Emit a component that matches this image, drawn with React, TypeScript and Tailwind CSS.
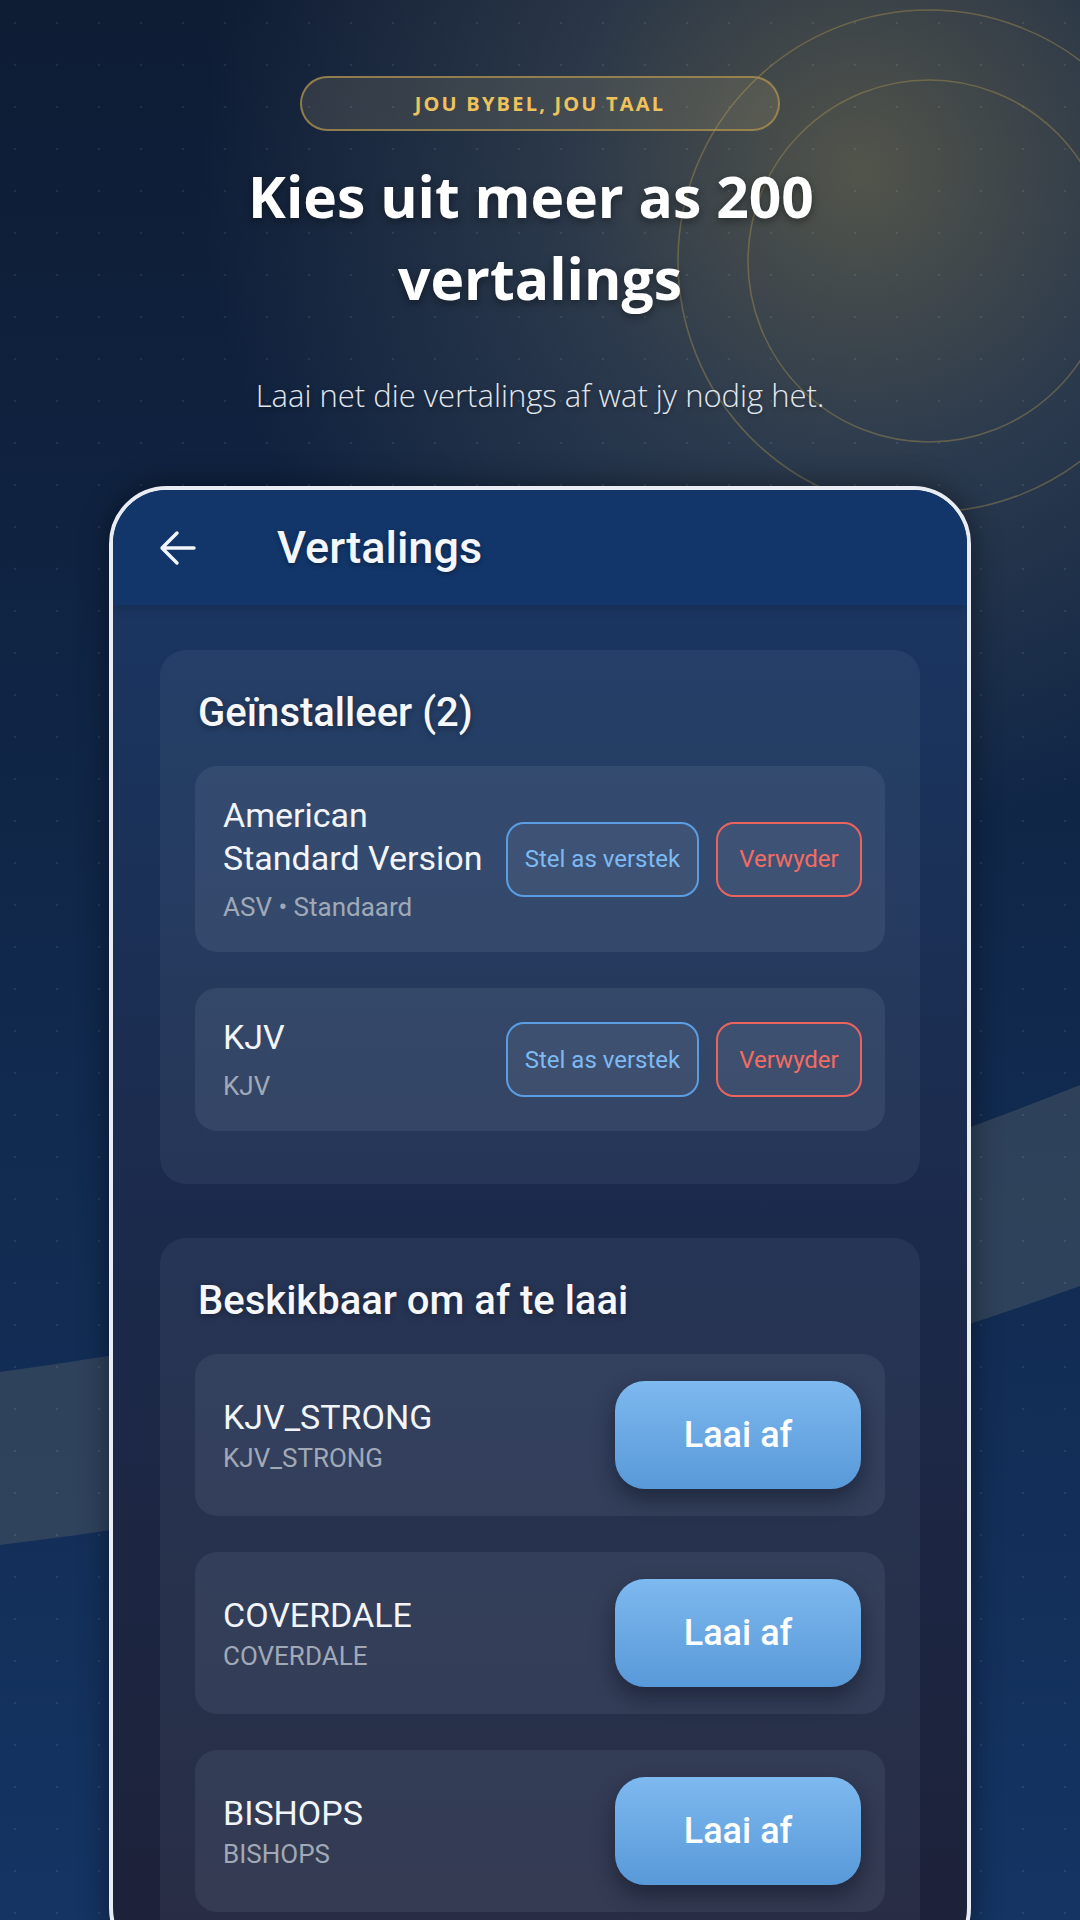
import React from "react";

type Installed = { name: string; sub: string };

const installed: Installed[] = [
  { name: "American Standard Version", sub: "ASV • Standaard" },
  { name: "KJV", sub: "KJV" },
];

const available: string[] = ["KJV_STRONG", "COVERDALE", "BISHOPS"];

function BackArrow() {
  return (
    <svg width="38" height="38" viewBox="0 0 38 38" fill="none">
      <path
        d="M35 19H4M18 4L3 19L18 34"
        stroke="#f2f5fa"
        strokeWidth="3.4"
        strokeLinecap="round"
        strokeLinejoin="round"
      />
    </svg>
  );
}

function Backdrop() {
  return (
    <>
      {/* soft golden glow top right */}
      <div className="absolute inset-0 bg-[radial-gradient(circle_at_860px_170px,rgba(124,118,86,0.62)_0px,rgba(82,92,98,0.42)_300px,rgba(40,60,90,0)_660px)]" />
      {/* swoosh band and rings */}
      <svg className="absolute inset-0" width="1080" height="1920" viewBox="0 0 1080 1920">
        <path
          d="M0 1372 Q540 1300 1080 1085 L1080 1286 Q540 1480 0 1545 Z"
          fill="#3a4b5e"
          fillOpacity="0.72"
        />
        <circle cx="929" cy="261" r="181" fill="none" stroke="#b89a52" strokeOpacity="0.38" strokeWidth="1.6" />
        <circle cx="929" cy="261" r="251" fill="none" stroke="#b89a52" strokeOpacity="0.38" strokeWidth="1.6" />
      </svg>
      {/* faint dot grid */}
      <div className="absolute inset-0 bg-[radial-gradient(circle,rgba(255,255,255,0.08)_1px,transparent_1.6px)] bg-[length:42px_42px] bg-[position:-6px_2px]" />
    </>
  );
}

function InstalledRow({ item }: { item: Installed }) {
  return (
    <div className="flex items-center rounded-[22px] bg-[#b4c3dc]/[0.10] py-[28px] pl-[28px] pr-[23px]">
      <div className="min-w-0 flex-1 pr-[12px]">
        <div className="text-[34px] leading-[43px] text-[#f1f4f9]">{item.name}</div>
        <div className="mt-[10px] text-[26px] leading-[34px] text-[#a1a9b7]">{item.sub}</div>
      </div>
      <div className="flex shrink-0 gap-[17px]">
        <button className="flex h-[75px] w-[193px] items-center justify-center rounded-[18px] border-2 border-[#5b9de2] bg-white/[0.05] text-[24px] text-[#7dbaf3]">
          Stel as verstek
        </button>
        <button className="flex h-[75px] w-[146px] items-center justify-center rounded-[18px] border-2 border-[#ea645d] bg-white/[0.05] text-[24px] text-[#f36c63]">
          Verwyder
        </button>
      </div>
    </div>
  );
}

function AvailableRow({ name }: { name: string }) {
  return (
    <div className="flex items-center rounded-[22px] bg-[#b4c3dc]/[0.09] py-[27px] pl-[28px] pr-[24px]">
      <div className="min-w-0 flex-1">
        <div className="text-[34px] leading-[43px] text-[#f1f4f9]">{name}</div>
        <div className="mt-[2px] text-[26px] leading-[34px] text-[#a1a9b7]">{name}</div>
      </div>
      <button className="flex h-[108px] w-[246px] shrink-0 items-center justify-center rounded-[30px] bg-linear-to-b from-[#7eb9ef] to-[#5899d9] text-[36px] font-medium text-white shadow-[0_10px_22px_rgba(5,10,25,0.45)]">
        Laai af
      </button>
    </div>
  );
}

function Section({ title, children }: { title: string; children: React.ReactNode }) {
  return (
    <div className="rounded-[26px] bg-[#aebfdc]/[0.08] px-[35px] pb-[53px] pt-[39px]">
      <div className="pl-[3px] text-[40px] font-medium leading-[48px] text-[#f5f7fb] [text-shadow:0_2px_6px_rgba(0,0,0,0.35)]">
        {title}
      </div>
      <div className="mt-[29px] flex flex-col gap-[36px]">{children}</div>
    </div>
  );
}

export default function App() {
  return (
    <div className="relative h-[1920px] w-[1080px] overflow-hidden bg-linear-to-b from-[#0e1c34] via-[#10284b] to-[#153463] font-['Open_Sans',sans-serif]">
      <Backdrop />

      <div className="relative flex flex-col items-center pt-[76px]">
        <div className="flex h-[55px] w-[480px] items-center justify-center rounded-full border-2 border-[#a88d4f]/80 bg-[#d6c08a]/[0.14]">
          <span className="text-[20px] font-bold tracking-[2.2px] text-[#f0c25c]">JOU BYBEL, JOU TAAL</span>
        </div>

        <h1 className="mt-[24px] flex flex-col items-center text-[57px] font-bold leading-[82px] text-white [text-shadow:0_3px_8px_rgba(0,0,0,0.4)]">
          <span className="mr-[18px]">Kies uit meer as 200</span>
          <span>vertalings</span>
        </h1>

        <p className="mt-[58px] text-[31px] font-light leading-[36px] text-[#e2e7ef] [text-shadow:0_2px_5px_rgba(0,0,0,0.35)]">
          Laai net die vertalings af wat jy nodig het.
        </p>

        {/* device frame */}
        <div className="mt-[73px] h-[1480px] w-[862px] overflow-hidden rounded-[58px] border-4 border-[#e9edf3] bg-linear-to-b from-[#193865] via-[#1b2a4b] to-[#1d2138] font-['Roboto',sans-serif] shadow-[0_0_30px_rgba(0,0,0,0.45)]">
          <div className="flex h-[115px] items-center bg-[#12366a] pl-[46px] shadow-[0_4px_10px_rgba(0,0,0,0.15)]">
            <BackArrow />
            <span className="ml-[80px] text-[45px] font-medium text-[#f3f6fa] [text-shadow:0_2px_5px_rgba(0,0,0,0.35)]">
              Vertalings
            </span>
          </div>

          <div className="flex flex-col gap-[54px] px-[47px] pt-[45px]">
            <Section title="Geïnstalleer (2)">
              {installed.map((it) => (
                <InstalledRow key={it.name} item={it} />
              ))}
            </Section>

            <Section title="Beskikbaar om af te laai">
              {available.map((n) => (
                <AvailableRow key={n} name={n} />
              ))}
            </Section>
          </div>
        </div>
      </div>
    </div>
  );
}
